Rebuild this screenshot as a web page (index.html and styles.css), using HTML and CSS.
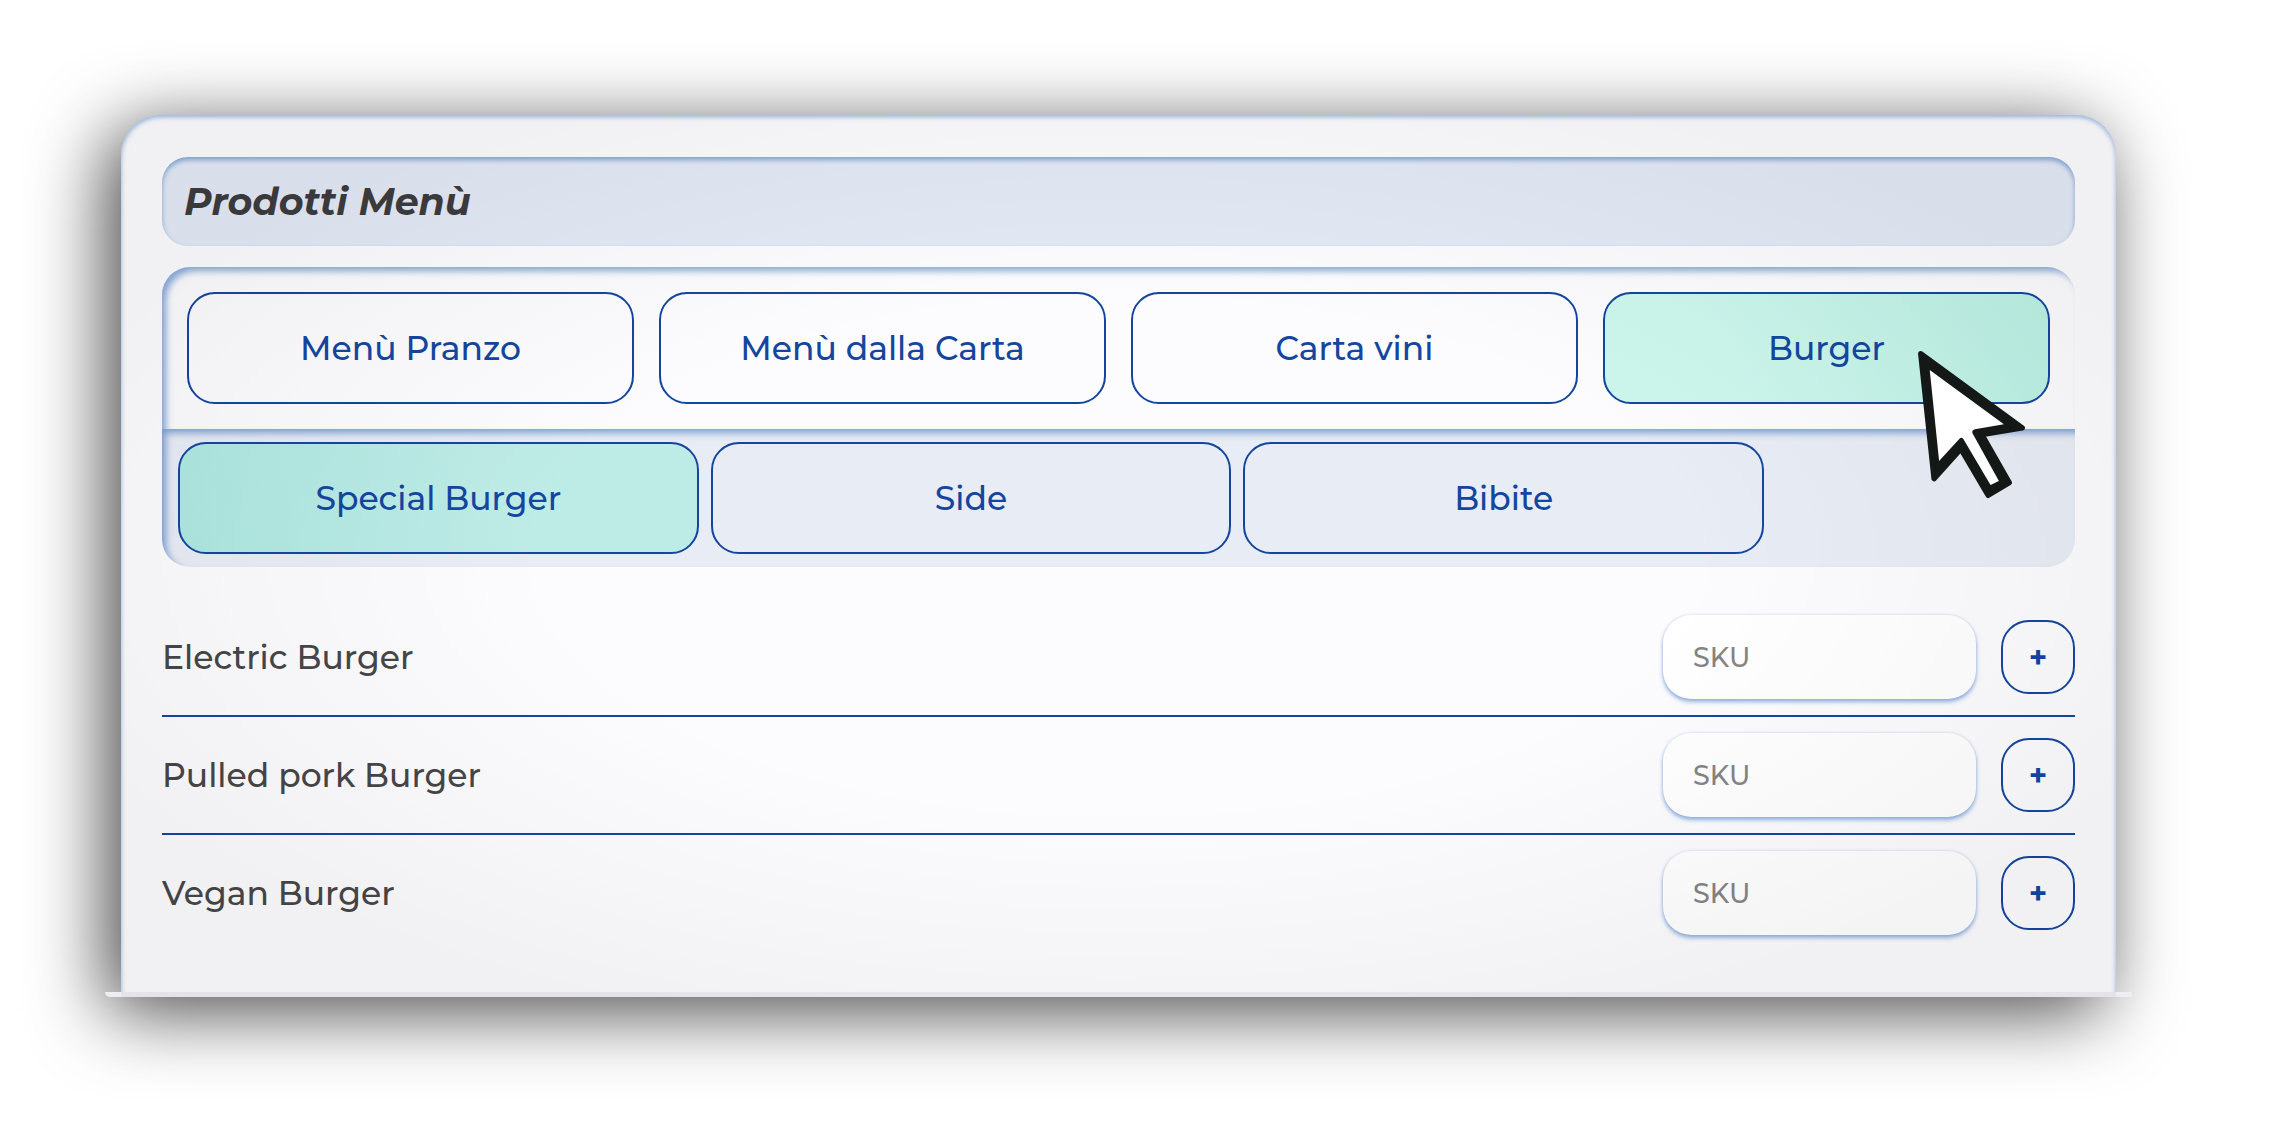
FILE: index.html
```html
<!DOCTYPE html>
<html lang="it">
<head>
    <meta charset="UTF-8">
    <meta name="viewport" content="width=device-width, initial-scale=1.0">
    <title>Prodotti Menù</title>
    <link rel="stylesheet" href="styles.css">
</head>
<body>
    <main class="panel">
        <h1 class="title">Prodotti Menù</h1>

        <div class="menus">
            <nav class="menu-list">
                <button type="button" class="tab">Menù Pranzo</button>
                <button type="button" class="tab">Menù dalla Carta</button>
                <button type="button" class="tab">Carta vini</button>
                <button type="button" class="tab active">Burger</button>
            </nav>
            <nav class="category-list">
                <button type="button" class="tab active">Special Burger</button>
                <button type="button" class="tab">Side</button>
                <button type="button" class="tab">Bibite</button>
            </nav>
            <svg class="cursor" viewBox="110 60 326 446" aria-hidden="true">
                <path class="cursor-edge" d="M121 71L425 293L304 313L386 457L323 495L241 356L161 445Z"/>
                <path class="cursor-fill" d="M148 120L370 282L283 297Q273 300 276 309L355 452L330 464L249 327Q243 319 237 326L176 392Z"/>
            </svg>
        </div>

        <ul class="products">
            <li class="product">
                <label class="name" for="sku1">Electric Burger</label>
                <input class="sku" type="text" id="sku1" placeholder="SKU">
                <button type="button" class="add">+</button>
            </li>
            <li class="product">
                <label class="name" for="sku2">Pulled pork Burger</label>
                <input class="sku" type="text" id="sku2" placeholder="SKU">
                <button type="button" class="add">+</button>
            </li>
            <li class="product">
                <label class="name" for="sku3">Vegan Burger</label>
                <input class="sku" type="text" id="sku3" placeholder="SKU">
                <button type="button" class="add">+</button>
            </li>
        </ul>

        <div class="panel-foot"></div>
    </main>
</body>
</html>
```

FILE: styles.css
```css
* {
    box-sizing: border-box;
}
body {
    margin: 0;
    padding: 115px 154px 115px 121px;
    background-color: white;
    font-family: Montserrat, Inter, sans-serif;
    font-size: 33px;
    font-weight: 500;
    color: #464648;
}
button, input {
    font-family: inherit;
    font-weight: inherit;
    margin: 0;
}
.panel {
    position: relative;
    padding: 42px 41px 0;
    border-radius: 40px 40px 0 0;
    background-color: #fcfcfe;
    box-shadow: -14px 14px 76px rgba(0, 0, 0, 0.72),
        inset 0 2px 5px rgba(50, 110, 200, 0.5);
}
/* vignette over the whole panel */
.panel::after {
    content: "";
    position: absolute;
    inset: 0;
    border-radius: inherit;
    background: radial-gradient(ellipse, transparent 40%, rgba(0, 0, 0, 0.045) 80%);
    pointer-events: none;
}
.title {
    margin: 0 0 21px;
    padding: 0 22px;
    border-radius: 26px;
    background-color: #e3e9f5;
    box-shadow: inset 0 3px 5px rgba(50, 110, 190, 0.55);
    color: #3c3c3e;
    font-size: 38px;
    font-style: italic;
    font-weight: 700;
    line-height: 89px;
}
.menus {
    position: relative;
}
.menu-list {
    display: grid;
    grid-template-columns: repeat(4, 1fr);
    gap: 25px;
    padding: 25px;
    border-radius: 28px 28px 0 0;
    box-shadow: inset 5px 5px 7px -1px rgba(40, 100, 190, 0.55);
}
.category-list {
    display: flex;
    gap: 12px;
    padding: 13px 16px;
    border-radius: 0 0 28px 28px;
    background-color: #e8ecf5;
    box-shadow: inset 5px 5px 7px -1px rgba(40, 100, 190, 0.55);
}
.category-list .tab {
    width: calc(28% - 6px);
}
.tab {
    height: 112px;
    padding: 0;
    border: 2px solid #1446a0;
    border-radius: 28px;
    background: none;
    color: #1446a0;
    font-size: 33px;
    cursor: pointer;
}
.menu-list .active {
    background: linear-gradient(60deg, #ccf6ec 30%, #bbf0e3);
}
.category-list .active {
    background: linear-gradient(80deg, #aee8e1, #bdebe6 60%);
}
.cursor {
    position: absolute;
    z-index: 1;
    top: 83px;
    right: 49px;
    width: 109px;
    height: 149px;
}
.cursor-edge {
    fill: #141817;
    stroke: #141817;
    stroke-width: 16;
    stroke-linejoin: round;
}
.cursor-fill {
    fill: white;
}
.products {
    margin: 32px 0 0;
    padding: 0 0 41px;
    list-style: none;
}
.product {
    display: flex;
    align-items: center;
    gap: 25px;
    padding: 16px 0;
}
.product + .product {
    border-top: 2px solid #1446a0;
}
.name {
    flex: 1;
}
.sku {
    width: 313px;
    height: 84px;
    padding: 0 30px;
    border: none;
    border-radius: 28px;
    background-color: white;
    box-shadow: 0 3px 4px rgba(50, 110, 200, 0.5), 0 0 3px rgba(60, 90, 200, 0.2);
    color: #464648;
    font-size: 27px;
}
.sku::placeholder {
    color: #848484;
}
.add {
    width: 74px;
    height: 74px;
    padding: 0;
    border: 2px solid #1446a0;
    border-radius: 28px;
    background: none;
    color: #1446a0;
    font-size: 31px;
    font-weight: 700;
    cursor: pointer;
}
.panel-foot {
    height: 5px;
    margin: 0 -57px;
    border-radius: 0 0 0 5px;
    background-color: #efedf4;
}
```
